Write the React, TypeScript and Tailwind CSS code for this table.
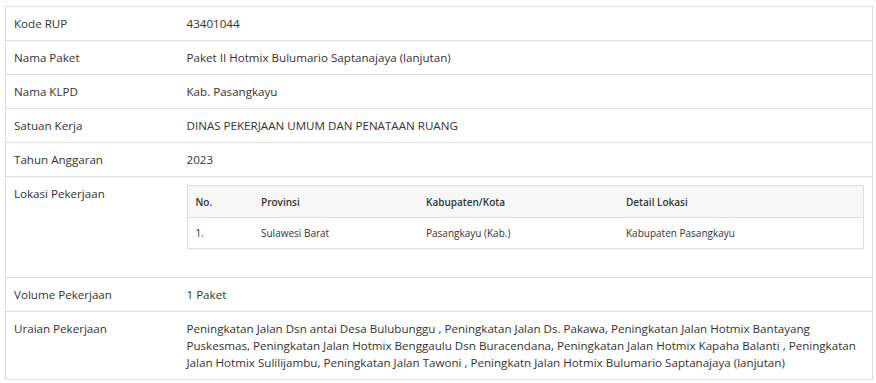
import React from "react";

export default function App() {
  const font = { fontFamily: '"Open Sans", "Noto Sans", sans-serif' };
  return (
    <div className="bg-white w-[876px] h-[383px] overflow-hidden pl-[5px] pt-[6px]" style={font}>
      <table className="w-[868px] border-collapse border border-[#dddddd] text-[11.6px] leading-[17px] text-[#333333]">
        <tbody>
          <Row label="Kode RUP">43401044</Row>
          <Row label="Nama Paket">Paket II Hotmix Bulumario Saptanajaya (lanjutan)</Row>
          <Row label="Nama KLPD">Kab. Pasangkayu</Row>
          <Row label="Satuan Kerja">DINAS PEKERJAAN UMUM DAN PENATAAN RUANG</Row>
          <Row label="Tahun Anggaran">2023</Row>
          <Row label="Lokasi Pekerjaan">
            <table className="w-full border-collapse border border-[#dddddd] mb-5 text-[10px] leading-[14px] text-[#333333]">
              <thead>
                <tr className="bg-[#f7f7f7]">
                  <th className="w-[66px] text-left font-semibold px-2 h-[32px]">No.</th>
                  <th className="w-[165px] text-left font-semibold px-2">Provinsi</th>
                  <th className="w-[200px] text-left font-semibold px-2">Kabupaten/Kota</th>
                  <th className="text-left font-semibold px-2">Detail Lokasi</th>
                </tr>
              </thead>
              <tbody>
                <tr className="border-t border-[#dddddd]">
                  <td className="px-2 h-[31px]">1.</td>
                  <td className="px-2">Sulawesi Barat</td>
                  <td className="px-2">Pasangkayu (Kab.)</td>
                  <td className="px-2">Kabupaten Pasangkayu</td>
                </tr>
              </tbody>
            </table>
          </Row>
          <Row label="Volume Pekerjaan">1 Paket</Row>
          <Row label="Uraian Pekerjaan">
            Peningkatan Jalan Dsn antai Desa Bulubunggu , Peningkatan Jalan Ds. Pakawa, Peningkatan Jalan Hotmix Bantayang Puskesmas, Peningkatan Jalan Hotmix Benggaulu Dsn Buracendana, Peningkatan Jalan Hotmix Kapaha Balanti , Peningkatan Jalan Hotmix Sulilijambu, Peningkatan Jalan Tawoni , Peningkatn Jalan Hotmix Bulumario Saptanajaya (lanjutan)
          </Row>
        </tbody>
      </table>
    </div>
  );
}

function Row({ label, children }: { label: string; children: React.ReactNode }) {
  return (
    <tr className="border-t border-[#dddddd]">
      <td className="w-[173px] align-top px-2 py-2">{label}</td>
      <td className="align-top px-2 py-2">{children}</td>
    </tr>
  );
}
